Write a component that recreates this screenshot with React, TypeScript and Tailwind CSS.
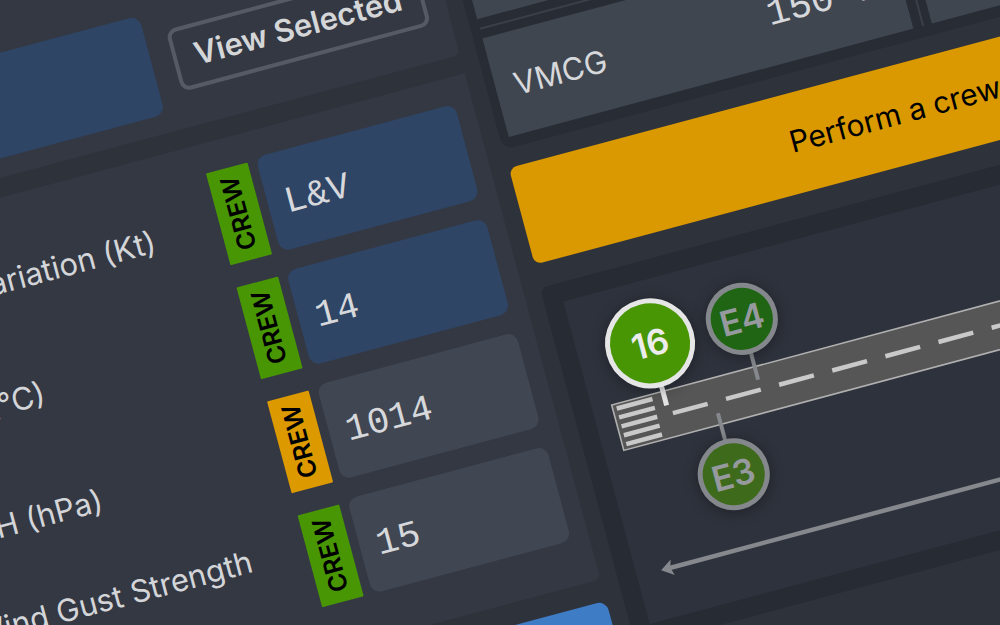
import React from "react";

const rows = [
  { label: <>Wind Variation (Kt)</>, value: "L&V", blue: true, badge: "bg-[#489604]" },
  { label: <>OAT (°C)</>, value: "14", blue: true, badge: "bg-[#489604]" },
  { label: <>QNH (hPa)</>, value: "1014", blue: false, badge: "bg-[#dc9a00]" },
  { label: <>Wind Gust Strength<br />(Kt)</>, value: "15", blue: false, badge: "bg-[#489604]" },
];

function Row({ row }: { row: (typeof rows)[number] }) {
  return (
    <div className="flex items-center h-[98px]">
      <div className="flex-1 pl-[2px] pt-[11px] text-[31px] leading-10 text-[#d3d5d8]">{row.label}</div>
      <div className={`flex items-center justify-center w-[43px] h-[95px] mt-[2px] rounded-[1px] ${row.badge}`}>
        <span className="[writing-mode:vertical-rl] rotate-180 font-semibold text-[25px] leading-none text-black">
          CREW
        </span>
      </div>
      <div
        className={`flex items-center w-[206px] h-[98px] ml-[9px] pl-[17px] pt-[8px] rounded-[10px] font-['Liberation_Mono',monospace] text-[37px] text-[#d6d8db] ${
          row.blue ? "bg-[#2e4565]" : "bg-[#404752]"
        }`}
      >
        {row.value}
      </div>
    </div>
  );
}

function VDivider() {
  return (
    <div className="w-[19px] shrink-0 flex justify-center bg-[#282c35]">
      <div className="w-[2px] bg-[#3a3f48]" />
    </div>
  );
}

function Pin({
  cx,
  cy,
  r,
  label,
  fill,
  ring,
  text,
}: {
  cx: number;
  cy: number;
  r: number;
  label: string;
  fill: string;
  ring: string;
  text: string;
}) {
  return (
    <div
      className={`absolute flex items-center justify-center rounded-full border-[5px] text-[35px] font-semibold shadow-[0_2px_14px_rgba(0,0,0,0.35)] ${fill} ${ring} ${text}`}
      style={{ left: cx - r, top: cy - r, width: r * 2, height: r * 2 }}
    >
      {label}
    </div>
  );
}

function Runway() {
  const dashes = Array.from({ length: 12 }, (_, i) => 77 + i * 55);
  const stripes = [0, 1, 2, 3, 4];
  return (
    <svg className="absolute left-0 top-0" width="700" height="330" viewBox="0 0 700 330" fill="none">
      <rect x="20" y="112.5" width="760" height="47" fill="#565656" stroke="#b0b0b0" strokeWidth="1.6" />
      {stripes.map((i) => (
        <rect key={i} x="24" y={115 + i * 9.2} width="37" height="4.5" fill="#c9c9c9" />
      ))}
      {dashes.map((x) => (
        <rect key={x} x={x} y="134" width="36" height="4.5" fill="#c9c9c9" />
      ))}
      <rect x="70.5" y="100" width="5" height="27" fill="#e4e4e4" />
      <rect x="166" y="90" width="4" height="36" fill="#85888c" />
      <rect x="118.5" y="148" width="4" height="30" fill="#85888c" />
      <path d="M32 285 H760" stroke="#85888c" strokeWidth="4.5" />
      <path d="M25 285 L37 277 L34.5 285 L37 293 Z" fill="#85888c" />
    </svg>
  );
}

export default function App() {
  return (
    <div className="w-[1000px] h-[625px] overflow-hidden bg-[#2e323b] font-['Inter',sans-serif]">
      <div className="flex w-[1260px] h-[900px] -ml-[200px] rotate-[-15deg] origin-[200px_0px] bg-[#2e323b]">
        {/* left column */}
        <div className="flex flex-col w-[630px] shrink-0">
          <div className="flex items-center justify-end h-[172px] pt-[32px] pr-[20px] bg-[#343843] rounded-br-md">
            <div className="w-[320px] h-[102px] rounded-[10px] bg-[#2e4565]" />
            <div className="flex items-center w-[258px] h-[64px] ml-[22px] mt-[3px] pl-[18px] rounded-[10px] border-4 border-[#565a64] text-[31px] font-semibold text-[#d5d6d8] whitespace-nowrap">
              View Selected
            </div>
          </div>
          <div className="flex flex-col gap-[20px] mt-[19px] pt-[27px] pr-[18px] pb-[45px] pl-[10px] bg-[#343843] rounded-br-md">
            {rows.map((r, i) => (
              <Row key={i} row={r} />
            ))}
          </div>
          <div className="self-end w-[300px] h-[100px] mt-[22px] rounded-[10px] bg-[#3e7cc6]" />
        </div>

        {/* right column */}
        <div className="flex flex-col w-[620px] ml-[17px] shrink-0">
          <div className="flex flex-col pl-[9px] pb-[11px] bg-[#282c35] rounded-bl-xl">
            <div className="flex h-[142px]">
              <div className="w-[419px] shrink-0 bg-[#404650]" />
              <VDivider />
              <div className="flex-1 bg-[#404650]" />
            </div>
            <div className="flex flex-col justify-center h-[20px]">
              <div className="h-[2px] bg-[#3a3f48]" />
            </div>
            <div className="flex h-[102px]">
              <div className="flex items-center justify-between w-[419px] shrink-0 pl-[19px] pr-px pt-[4px] bg-[#404650] text-[#d6d8db]">
                <span className="text-[31px]">VMCG</span>
                <span className="mb-[4px] font-['Liberation_Mono',monospace] text-[38px]">150 kt</span>
              </div>
              <VDivider />
              <div className="flex-1 bg-[#404650]" />
            </div>
          </div>
          <div className="flex items-center h-[100px] mt-[19px] ml-px pb-1 pl-[278px] rounded-lg bg-[#da9900] text-[30px] text-black whitespace-nowrap">
            Perform a crew briefing
          </div>
          <div className="h-[372px] mt-[24px] border-[19px] border-[#272b34] rounded-lg bg-[#2e323c]">
            <div className="relative w-full h-full overflow-hidden">
              <Runway />
              <Pin cx={73} cy={63} r={45} label="16" fill="bg-[#489604]" ring="border-[#e6e6e6]" text="text-[#ececec]" />
              <Pin cx={168} cy={63} r={36} label="E4" fill="bg-[#1f6513]" ring="border-[#84878b]" text="text-[#969a9e]" />
              <Pin cx={119.5} cy={211} r={36} label="E3" fill="bg-[#3e6a1c]" ring="border-[#84878b]" text="text-[#969a9e]" />
            </div>
          </div>
        </div>
      </div>
    </div>
  );
}
